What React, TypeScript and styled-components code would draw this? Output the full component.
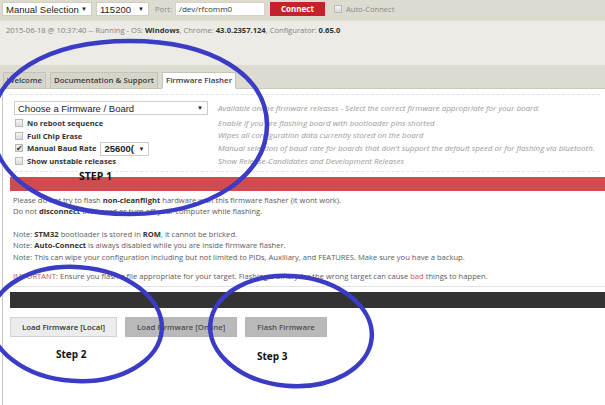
import styled, { createGlobalStyle } from 'styled-components'

const GlobalStyle = createGlobalStyle`
  html, body {
    margin: 0;
    padding: 0;
    background: #ffffff;
    overflow: hidden;
  }
  body {
    font-family: "Open Sans", "DejaVu Sans", sans-serif;
  }
`

const Page = styled.div`
  position: relative;
  width: 605px;
  height: 405px;
  overflow: hidden;
  background: #ffffff;
`

const TopBar = styled.div`
  height: 21px;
  box-sizing: border-box;
  padding: 2px 0 0 2px;
  background: #dddbcf;
  display: flex;
  align-items: flex-start;
`

interface BoxProps {
  w: number
  h?: number
}

const SelectBox = styled.div<BoxProps>`
  width: ${props => props.w}px;
  height: ${props => props.h || 14}px;
  box-sizing: border-box;
  background: #ffffff;
  border: 1px solid #cfcdc3;
  display: flex;
  align-items: center;
  justify-content: space-between;
  padding: 0 4px 0 3px;
  font-family: "Liberation Sans", Arial, sans-serif;
  font-size: 9.5px;
  color: #222;
  overflow: hidden;
  white-space: nowrap;
`

const Arrow = styled.span`
  font-size: 6px;
  color: #222;
`

const PortLabel = styled.span`
  margin: 0 3px 0 6px;
  font-size: 7.6px;
  line-height: 14px;
  color: #8a8a8a;
`

const TextInput = styled.div`
  width: 90px;
  height: 14px;
  box-sizing: border-box;
  background: #ffffff;
  border: 1px solid #d6d4ca;
  padding-left: 3px;
  font-size: 8px;
  line-height: 12px;
  color: #333;
`

const ConnectButton = styled.div`
  width: 55px;
  height: 14px;
  margin-left: 5px;
  background: #c3222a;
  color: #ffffff;
  font-size: 8px;
  font-weight: 700;
  line-height: 14px;
  text-align: center;
`

const CheckBox = styled.span<{ checked?: boolean }>`
  display: inline-block;
  width: 8px;
  height: 8px;
  box-sizing: border-box;
  border: 1px solid #b9b9b9;
  background: linear-gradient(#f4f4f4, #dcdcdc);
  position: relative;
  flex: none;
  &::after {
    content: ${props => (props.checked ? '"\\2714"' : '""')};
    position: absolute;
    left: 0;
    top: -3px;
    font-size: 8px;
    color: #333;
  }
`

const AutoConnect = styled.div`
  display: flex;
  align-items: center;
  gap: 4px;
  margin-left: 9px;
  height: 14px;
  font-size: 7.6px;
  color: #888;
`

const LogArea = styled.div`
  height: 44px;
  box-sizing: border-box;
  padding: 3px 6px;
  background: #edebe6;
  font-size: 7.6px;
  line-height: 12px;
  color: #808080;
  white-space: nowrap;
  b {
    color: #333;
    font-weight: 700;
  }
`

const TabBar = styled.div`
  height: 24px;
  box-sizing: border-box;
  background: #dddbcf;
  border-bottom: 1px solid #cbc9bd;
  display: flex;
  align-items: flex-end;
  gap: 4px;
  padding-left: 3px;
`

const Tab = styled.div<{ active?: boolean }>`
  height: 17px;
  box-sizing: border-box;
  padding: 0 3px;
  margin-bottom: -1px;
  border: 1px solid #c6c4b9;
  border-bottom: ${props => (props.active ? '1px solid #ffffff' : '1px solid #c6c4b9')};
  background: ${props => (props.active ? '#ffffff' : '#d7d5ca')};
  font-size: 7.9px;
  font-weight: 600;
  line-height: 15px;
  color: #3a3a3a;
  white-space: nowrap;
`

const Content = styled.div`
  margin-left: 2px;
  border-left: 1px solid #c8c8c8;
  padding: 5px 0 0 7px;
  height: 317px;
  box-sizing: border-box;
`

const Options = styled.div`
  margin-right: 5px;
  border-top: 1px dashed #e3e3e3;
  border-bottom: 1px dashed #e3e3e3;
  padding: 6px 0 3px 4px;
  display: grid;
  grid-template-columns: 204px 1fr;
`

const Control = styled.div`
  height: 12.8px;
  display: flex;
  align-items: center;
  gap: 4px;
  padding-left: 1px;
  font-size: 7.6px;
  font-weight: 700;
  color: #333;
  white-space: nowrap;
`

const SelectRow = styled.div`
  height: 15.5px;
`

const Description = styled.div<{ tall?: boolean }>`
  height: ${props => (props.tall ? 15.5 : 12.8)}px;
  line-height: ${props => (props.tall ? 14 : 12.8)}px;
  font-size: 8px;
  font-style: italic;
  color: #9a9a9a;
  white-space: nowrap;
`

const RedBar = styled.div`
  height: 14px;
  margin-top: 5px;
  background: #d04b4f;
`

const Notes = styled.div`
  padding: 4px 0 0 3px;
  font-size: 7.6px;
  line-height: 11.5px;
  color: #5a5a5a;
  white-space: nowrap;
  b {
    color: #333;
    font-weight: 700;
  }
`

const Gap = styled.div<{ h: number }>`
  height: ${props => props.h}px;
`

const Warn = styled.span`
  color: #c9555a;
`

const Separator = styled.div`
  margin-top: 3px;
  height: 1px;
  background: #e2e2e2;
`

const DarkBar = styled.div`
  margin-top: 5px;
  height: 16px;
  background: #333333;
`

const Buttons = styled.div`
  display: flex;
  gap: 8px;
  margin-top: 9px;
`

const Button = styled.div<{ disabled?: boolean }>`
  height: 20px;
  box-sizing: border-box;
  padding: 0 11px;
  border: 1px solid ${props => (props.disabled ? '#b6b6b6' : '#d2d2d2')};
  background: ${props => (props.disabled ? '#b9b9b9' : '#ececec')};
  color: ${props => (props.disabled ? '#4d4d4d' : '#333')};
  font-size: 7.8px;
  font-weight: 600;
  line-height: 18px;
  white-space: nowrap;
`

const Annotations = styled.svg`
  position: absolute;
  left: 0;
  top: 0;
  width: 605px;
  height: 405px;
  pointer-events: none;
`

const StepLabel = styled.div<{ x: number; y: number; caps?: boolean }>`
  position: absolute;
  left: ${props => props.x}px;
  top: ${props => props.y}px;
  font-family: "Open Sans", sans-serif;
  font-size: ${props => (props.caps ? 10.5 : 10)}px;
  font-weight: 700;
  color: #111;
  line-height: 12px;
`

const options = [
  { label: 'No reboot sequence', text: 'Enable if you are flashing board with bootloader pins shorted' },
  { label: 'Full Chip Erase', text: 'Wipes all configuration data currently stored on the board' },
  {
    label: 'Manual Baud Rate',
    text: "Manual selection of baud rate for boards that don't support the default speed or for flashing via bluetooth.",
    checked: true,
    baud: true,
  },
  { label: 'Show unstable releases', text: 'Show Release-Candidates and Development Releases' },
]

export default function App() {
  return (
    <Page>
      <GlobalStyle />
      <TopBar>
        <SelectBox w={90}>
          Manual Selection <Arrow>▼</Arrow>
        </SelectBox>
        <SelectBox w={53} style={{ marginLeft: 4 }}>
          115200 <Arrow>▼</Arrow>
        </SelectBox>
        <PortLabel>Port:</PortLabel>
        <TextInput>/dev/rfcomm0</TextInput>
        <ConnectButton>Connect</ConnectButton>
        <AutoConnect>
          <CheckBox />
          Auto-Connect
        </AutoConnect>
      </TopBar>

      <LogArea>
        2015-06-18 @ 10:37:40 -- Running - OS: <b>Windows</b>, Chrome: <b>43.0.2357.124</b>, Configurator:{' '}
        <b>0.65.0</b>
      </LogArea>

      <TabBar>
        <Tab>Welcome</Tab>
        <Tab>Documentation &amp; Support</Tab>
        <Tab active>Firmware Flasher</Tab>
      </TabBar>

      <Content>
        <Options>
          <SelectRow>
            <SelectBox w={194} h={14}>
              Choose a Firmware / Board <Arrow>▼</Arrow>
            </SelectBox>
          </SelectRow>
          <Description tall>
            Available online firmware releases - Select the correct firmware appropriate for your board.
          </Description>
          {options.map(o => (
            <>
              <Control key={o.label}>
                <CheckBox checked={o.checked} />
                {o.label}
                {o.baud && (
                  <SelectBox w={49} h={14}>
                    25600( <Arrow>▼</Arrow>
                  </SelectBox>
                )}
              </Control>
              <Description key={o.text}>{o.text}</Description>
            </>
          ))}
        </Options>

        <RedBar />

        <Notes>
          <div>
            Please do not try to flash <b>non-cleanflight</b> hardware with this firmware flasher (it wont work).
          </div>
          <div>
            Do not <b>disconnect</b> the board or turn off your computer while flashing.
          </div>
          <Gap h={11} />
          <div>
            Note: <b>STM32</b> bootloader is stored in <b>ROM</b>, it cannot be bricked.
          </div>
          <div>
            Note: <b>Auto-Connect</b> is always disabled while you are inside firmware flasher.
          </div>
          <div>
            Note: This can wipe your configuration including but not limited to PIDs, Auxiliary, and FEATURES. Make
            sure you have a backup.
          </div>
          <Gap h={8} />
          <div>
            <Warn>IMPORTANT</Warn>: Ensure you flash a file appropriate for your target. Flashing a binary for the
            wrong target can cause <Warn>bad</Warn> things to happen.
          </div>
        </Notes>

        <Separator />
        <DarkBar />

        <Buttons>
          <Button>Load Firmware [Local]</Button>
          <Button disabled>Load Firmware [Online]</Button>
          <Button disabled>Flash Firmware</Button>
        </Buttons>
      </Content>

      <StepLabel x={79} y={170} caps>
        STEP 1
      </StepLabel>
      <StepLabel x={56} y={348}>
        Step 2
      </StepLabel>
      <StepLabel x={257} y={350}>
        Step 3
      </StepLabel>

      <Annotations viewBox="0 0 605 405">
        <g fill="none" stroke="#3a3cc6" strokeWidth="4.5">
          <path d="M130,41 C212,41 267,75 267,125 C267,175 212,214 130,214 C47,214 -8,177 -8,125 C-8,75 47,41 130,41 Z" />
          <ellipse cx="76" cy="324" rx="86" ry="57" transform="rotate(4 76 324)" />
          <ellipse cx="291" cy="331" rx="81" ry="55" transform="rotate(5 291 331)" />
        </g>
      </Annotations>
    </Page>
  )
}
